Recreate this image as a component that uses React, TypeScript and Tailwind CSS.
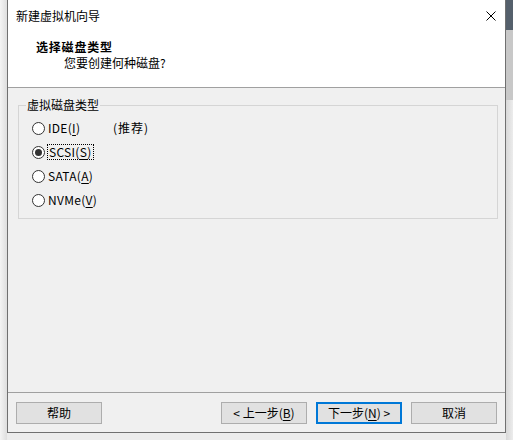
import React from "react";

const FONT = { fontFamily: '"Noto Sans CJK SC", "Noto Sans", sans-serif' };

function Radio({ checked }: { checked?: boolean }) {
  return (
    <span className="w-[13px] h-[13px] rounded-full border border-[#333333] bg-white flex items-center justify-center shrink-0">
      {checked && <span className="w-[7px] h-[7px] rounded-full bg-[#333333]" />}
    </span>
  );
}

function Mn({ children }: { children: React.ReactNode }) {
  return <span className="underline underline-offset-2 decoration-1">{children}</span>;
}

function Btn({
  children,
  focused,
}: {
  children: React.ReactNode;
  focused?: boolean;
}) {
  return (
    <button
      className={
        focused
          ? "w-[86px] h-[22px] border-2 border-[#0078d7] bg-[#e1e1e1] text-[12px] leading-[16px] text-black flex items-center justify-center"
          : "w-[86px] h-[22px] border border-[#adadad] bg-[#e1e1e1] text-[12px] leading-[16px] text-black flex items-center justify-center"
      }
    >
      {children}
    </button>
  );
}

export default function App() {
  return (
    <div
      className="w-[513px] h-[440px] flex bg-[#ececec] overflow-hidden"
      style={FONT}
    >
      {/* shadow strip on the left */}
      <div className="w-[7px] h-full bg-gradient-to-r from-[#f4f4f4] to-[#dedede]" />

      {/* wizard window */}
      <div className="w-[499px] h-[433px] border-l border-r border-b border-[#707070] flex flex-col bg-[#f0f0f0] shrink-0">
        {/* title bar */}
        <div className="h-[31px] bg-white flex items-center justify-between pl-[8px] pr-[9px]">
          <span className="text-[12px] leading-[16px] text-black">新建虚拟机向导</span>
          <svg width="10" height="10" viewBox="0 0 10 10" className="shrink-0">
            <path d="M0.5 0.5 L9.5 9.5 M9.5 0.5 L0.5 9.5" stroke="#000" strokeWidth="1" />
          </svg>
        </div>

        {/* header */}
        <div className="h-[56px] bg-white flex flex-col pt-[8px]">
          <span className="pl-[28px] text-[12px] leading-[16px] font-bold text-black tracking-[0.8px]">
            选择磁盘类型
          </span>
          <span className="pl-[56px] text-[12px] leading-[16px] text-black">
            您要创建何种磁盘?
          </span>
        </div>
        <div className="h-px bg-[#a0a0a0]" />

        {/* body */}
        <div className="h-[304px] pl-[10px] pr-[7px] pt-[9px]">
          <fieldset className="border border-[#d5d5d5] pl-[7px] pb-[6px]">
            <legend className="px-[1px] text-[12px] leading-[16px] text-black">虚拟磁盘类型</legend>
            <div className="flex flex-col pt-[3px] text-[12px] leading-[16px] text-black">
              <div className="h-[24px] flex items-center pl-[6px]">
                <Radio />
                <span className="w-[68px] pl-[3px] tracking-[0.3px]">
                  IDE(<Mn>I</Mn>)
                </span>
                <span className="tracking-[1px]">(推荐)</span>
              </div>
              <div className="h-[24px] flex items-center pl-[6px]">
                <Radio checked />
                <span className="ml-[2px] px-[1px] border border-dotted border-black leading-[14px] tracking-[0.3px]">
                  SCSI(<Mn>S</Mn>)
                </span>
              </div>
              <div className="h-[24px] flex items-center pl-[6px]">
                <Radio />
                <span className="pl-[3px] tracking-[0.3px]">
                  SATA(<Mn>A</Mn>)
                </span>
              </div>
              <div className="h-[24px] flex items-center pl-[6px]">
                <Radio />
                <span className="pl-[3px] tracking-[0.3px]">
                  NVMe(<Mn>V</Mn>)
                </span>
              </div>
            </div>
          </fieldset>
        </div>

        <div className="h-px bg-[#a0a0a0]" />

        {/* footer buttons */}
        <div className="h-[39px] pt-[9px] pl-[8px] pr-[8px] flex items-start justify-between">
          <Btn>帮助</Btn>
          <div className="flex gap-[9px]">
            <Btn>
              &lt; 上一步(<Mn>B</Mn>)
            </Btn>
            <Btn focused>
              下一步(<Mn>N</Mn>) &gt;
            </Btn>
            <Btn>取消</Btn>
          </div>
        </div>
      </div>

      {/* desktop behind the window, right side */}
      <div className="flex-1 flex flex-col overflow-hidden">
        <div className="h-[30px] bg-[#55606c]" />
        <div className="h-[70px] bg-[#c8c8c8]" />
        <div className="flex-1 bg-gradient-to-r from-[#d8d8d8] to-[#ececec]" />
      </div>
    </div>
  );
}
